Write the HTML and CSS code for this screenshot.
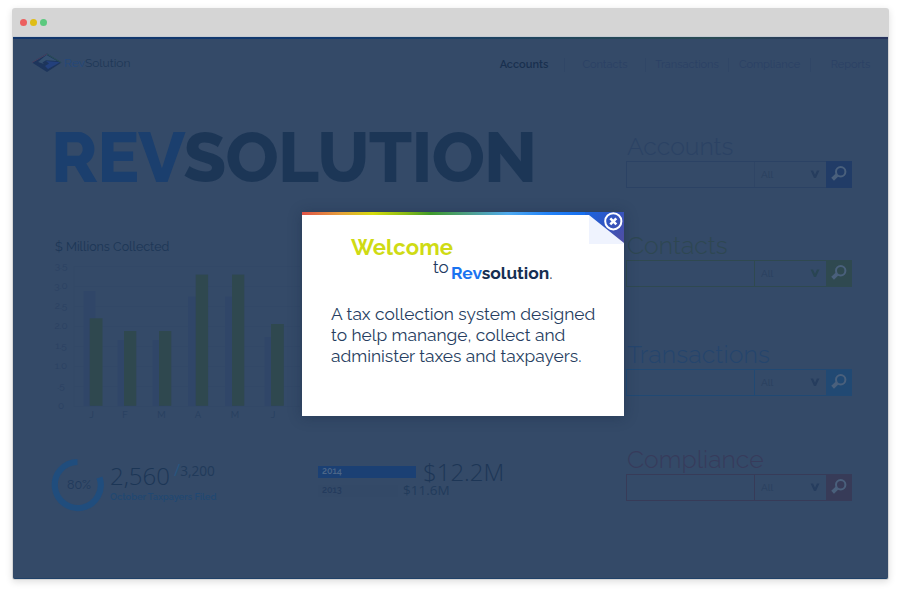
FILE: index.html
```html
<!DOCTYPE html>
<html lang="en">
<head>
<meta charset="utf-8">
<title>RevSolution</title>
<link rel="stylesheet" href="styles.css">
</head>
<body>
<svg width="0" height="0" class="defs" aria-hidden="true">
  <symbol id="search" viewBox="0 0 26 26">
    <circle cx="14.7" cy="10.7" r="4.7" fill="none" stroke="currentColor" stroke-width="2"/>
    <path d="M11.2 13.9 L6.6 18.2" stroke="currentColor" stroke-width="4" stroke-linecap="butt"/>
  </symbol>
  <symbol id="chevron" viewBox="0 0 10 9">
    <path d="M.6 .5 H3 L5 4.8 L7 .5 H9.4 L6 8 H4z" fill="currentColor"/>
  </symbol>
</svg>
<div class="window">
  <div class="titlebar"><i class="dot red"></i><i class="dot yellow"></i><i class="dot green"></i></div>
  <div class="screen">
    <header class="header">
      <div class="logo">
        <svg width="30" height="20" viewBox="0 0 30 20">
          <path d="M15 .5 L29.5 9.5 L15 19 L0 9.5z" fill="#1d355c"/>
          <path d="M14.5 2 L25 8 L14 7.3 L10.5 9.5 L12 11 L6 9z" fill="#345070"/>
          <path d="M0 9.5 L15 1" stroke="#49415f" stroke-width="1"/>
          <path d="M15 1 L29 9.5" stroke="#2c5156" stroke-width="1"/>
          <path d="M14 8 L28 9.2 L16 16 L13 13 L17 10.5z" fill="#23407c"/>
        </svg>
        <span class="brand"><b>Rev</b>Solution</span>
      </div>
      <nav class="nav"><a class="active">Accounts</a><a>Contacts</a><a class="wide">Transactions</a><a>Compliance</a><a>Reports</a></nav>
    </header>
    <main class="main">
      <section class="left">
        <h1 class="hero"><span>REV</span>SOLUTION</h1>
        <h2 class="chart-title">$ Millions Collected</h2>
        <svg class="chart" width="246" height="165" viewBox="0 0 246 165">
          <g class="grid"><path d="M20 11.5H246M20 31.5H246M20 51.5H246M20 71.5H246M20 91.5H246M20 111.5H246M20 131.5H246M20 151.5H246M20 11V152"/></g>
          <g class="ticks">
            <text x="7" y="14">3.5</text><text x="7" y="34">3.0</text><text x="7" y="54">2.5</text><text x="7" y="74">2.0</text><text x="7" y="94">1.5</text><text x="7" y="114">1.0</text><text x="7" y="134">.5</text><text x="7" y="154">0</text>
          </g>
          <g class="prev">
            <rect x="29.5" y="36" width="12" height="115"/><rect x="63.5" y="85" width="12" height="66"/><rect x="98.5" y="85" width="12" height="66"/><rect x="134" y="41.5" width="12" height="109.5"/><rect x="171" y="41.5" width="12" height="109.5"/><rect x="210.5" y="82" width="12" height="69"/>
          </g>
          <g class="curr">
            <rect x="35.7" y="63.3" width="12.8" height="87.5"/><rect x="70" y="76" width="12.3" height="74.8"/><rect x="105" y="76" width="12.3" height="74.8"/><rect x="141.7" y="19.6" width="12.4" height="131.2"/><rect x="178" y="19.6" width="12.3" height="131.2"/><rect x="217" y="69" width="12.8" height="81.8"/>
          </g>
          <g class="months"><text x="37.5" y="162.5">J</text><text x="71" y="162.5">F</text><text x="107.5" y="162.5">M</text><text x="144" y="162.5">A</text><text x="181" y="162.5">M</text><text x="219" y="162.5">J</text></g>
        </svg>
        <div class="stats">
          <div class="donut">
            <svg width="54" height="54" viewBox="0 0 54 54"><path d="M26.5 4 A23 23 0 1 0 48.5 19.5" fill="none" stroke="#204d7d" stroke-width="6.2"/></svg>
            <span>80%</span>
          </div>
          <div class="filed">
            <div class="figures"><span class="big">2,560</span><span class="slash">/</span><span class="small">3,200</span></div>
            <div class="caption">October Taxpayers Filed</div>
          </div>
          <div class="years">
            <div class="year now"><span class="bar">2014</span><span class="amount">$12.2M</span></div>
            <div class="year past"><span class="bar">2013</span><span class="amount">$11.6M</span></div>
          </div>
        </div>
      </section>
      <aside class="right">
        <div class="finder accounts"><h3>Accounts</h3><div class="field"><span class="input"></span><span class="select">All<svg width="10" height="9"><use href="#chevron"/></svg></span><span class="go"><svg width="26" height="26"><use href="#search"/></svg></span></div></div>
        <div class="finder contacts"><h3>Contacts</h3><div class="field"><span class="input"></span><span class="select">All<svg width="10" height="9"><use href="#chevron"/></svg></span><span class="go"><svg width="26" height="26"><use href="#search"/></svg></span></div></div>
        <div class="finder transactions"><h3>Transactions</h3><div class="field"><span class="input"></span><span class="select">All<svg width="10" height="9"><use href="#chevron"/></svg></span><span class="go"><svg width="26" height="26"><use href="#search"/></svg></span></div></div>
        <div class="finder compliance"><h3>Compliance</h3><div class="field"><span class="input"></span><span class="select">All<svg width="10" height="9"><use href="#chevron"/></svg></span><span class="go"><svg width="26" height="26"><use href="#search"/></svg></span></div></div>
      </aside>
    </main>
    <div class="modal">
      <div class="rainbow"></div>
      <svg class="corner" width="42" height="33" viewBox="0 0 42 33">
        <defs><linearGradient id="fold" x1="0" y1="0" x2="1" y2="0.7"><stop offset="0" stop-color="#1a66e0"/><stop offset=".5" stop-color="#2f55c4"/><stop offset="1" stop-color="#4b4fa8"/></linearGradient></defs>
        <path d="M7 3H42V32H7z" fill="#eff3fe"/>
        <path d="M3 0H42V31L7 3H3z" fill="url(#fold)"/>
        <circle cx="31.3" cy="9.3" r="8.1" fill="none" stroke="#fff" stroke-width="2"/>
        <path d="M28.3 6.3L34.3 12.3M34.3 6.3L28.3 12.3" stroke="#fff" stroke-width="2.6"/>
      </svg>
      <div class="welcome">Welcome</div>
      <div class="to-line"><span class="to">to</span><span class="name"><b>Rev</b>solution<i>.</i></span></div>
      <p class="message">A tax collection system designed<br>to help manange, collect and<br>administer taxes and taxpayers.</p>
    </div>
  </div>
</div>
</body>
</html>
```
FILE: styles.css
```css
* { box-sizing: border-box; }
body { margin: 0; width: 908px; height: 600px; overflow: hidden; background: #fff; font-family: Raleway, Lato, sans-serif; padding: 8px 19px 0 12px; }
h1, h2, h3, p { margin: 0; font-weight: 400; }
.defs { position: absolute; }
.window { width: 877px; height: 572px; border-radius: 3px; box-shadow: 0 2px 7px rgba(0,0,0,.13); background: #d5d5d5; }
.titlebar { height: 28px; display: flex; align-items: center; gap: 3px; padding-left: 8px; }
.dot { width: 7px; height: 7px; border-radius: 50%; }
.red { background: #ec5f5f; } .yellow { background: #dfbd16; } .green { background: #5bc97e; }
.screen { position: relative; width: 875px; height: 543px; margin: 0 1px; background: #344a68; border-top: 1px solid #c5cbd2; border-bottom: 1px solid #1f4168; border-radius: 0 0 2px 2px; }
.screen::before { content: ""; display: block; height: 2px; background: linear-gradient(90deg, #12366b, #123a70 35%, #23475a 65%, #2a4c55 80%, #27335c 95%); }

.header { height: 48px; display: flex; justify-content: space-between; overflow: hidden; }
.logo { display: flex; padding: 14px 0 0 19px; }
.brand { font-size: 12px; line-height: 21px; margin-left: 2px; color: #1f3857; }
.brand b { font-weight: 400; color: #23487c; }
.nav { display: grid; grid-template-columns: 81px 81px 83px 82px 77px; margin: 19px 0 0 0; height: 14px; }
.nav a { font-size: 11px; line-height: 13px; text-align: center; color: #2b4165; border-right: 1px solid #304666; }
.nav a:last-child { border: 0; padding-left: 2px; }
.nav a.active { color: #19304f; font-weight: 600; }

.main { display: flex; justify-content: space-between; padding: 0 36px 0 41px; }
.left { width: 500px; padding-top: 35px; }
.hero { font-size: 70px; line-height: 70px; font-weight: 800; color: #1c3656; white-space: nowrap; letter-spacing: -.75px; margin-left: -3px; }
.hero span { color: #1b3f6e; }
.chart-title { font-size: 12.5px; line-height: 16px; color: #1c3656; margin: 47px 0 0 1px; }
.chart { display: block; margin-top: 0; }
.grid path { stroke: #324867; fill: none; }
.ticks text { font-size: 10px; text-anchor: middle; fill: #2b4162; }
.months text { font-size: 9.5px; text-anchor: middle; fill: #273f5f; }
.prev { fill: #304668; } .curr { fill: #2f484f; }

.stats { display: flex; align-items: flex-start; margin: 38px 0 0 -3px; }
.donut { display: grid; width: 54px; height: 54px; place-items: center; }
.donut > * { grid-area: 1 / 1; }
.donut span { font-size: 12.5px; color: #20395b; line-height: 14px; padding-left: 2px; }
.filed { margin-left: 5px; width: 208px; }
.figures { display: flex; font-family: "Open Sans", sans-serif; font-weight: 300; color: #1c3656; height: 32px; }
.big { font-size: 24px; line-height: 35px; }
.slash { font-size: 17px; line-height: 24px; font-weight: 400; color: #28557f; margin: 0 0 0 4px; }
.small { font-size: 13.6px; line-height: 25px; font-weight: 400; color: #213a5a; }
.caption { font-size: 9.3px; line-height: 13px; font-weight: 600; color: #214872; }
.years { padding-top: 2px; }
.year { display: flex; align-items: center; font-family: "Open Sans", sans-serif; font-weight: 300; color: #1d3656; }
.bar { height: 12px; line-height: 11px; font-family: Raleway, Lato, sans-serif; font-size: 9px; font-weight: 600; padding-left: 4px; }
.now { height: 24px; } .past { height: 13px; }
.now .bar { width: 98px; background: #1b4074; color: #4d6788; }
.past .bar { width: 80px; background: #334967; color: #243b5d; }
.now .amount { font-size: 24px; line-height: 22px; margin: -1px 0 0 7px; }
.past .amount { font-size: 13.5px; line-height: 13px; margin-left: 5px; font-weight: 400; color: #223b5b; }

.right { width: 226px; padding-top: 45px; }
.finder { height: 99px; color: var(--c); }
.contacts { height: 109px; } .transactions { height: 105px; }
.accounts { --c: #2b4264; --b: #213c67; }
.contacts { --c: #2e4752; --b: #2f4950; }
.transactions { --c: #25456d; --b: #214973; }
.compliance { --c: #373b5b; --b: #373b58; }
.finder h3 { font-size: 24.8px; line-height: 30px; font-weight: 300; padding-left: 1px; height: 29px; }
.transactions h3 { letter-spacing: .15px; }
.field { display: flex; height: 27px; border: 1px solid var(--b); }
.accounts .field { border-color: #2b4264; }
.input { width: 128px; border-right: 1px solid var(--b); }
.accounts .input { border-color: #2f4565; }
.select { width: 71px; display: flex; align-items: center; justify-content: space-between; padding: 0 6px 0 6px; font-size: 10px; color: #293f5e; }
.select svg { color: #263d5e; }
.contacts .select svg { color: #294553; }
.go { width: 26px; height: 27px; margin: -1px -1px 0 0; background: var(--b); color: #4a607c; }
.go svg { display: block; }

.modal { position: absolute; left: 289px; top: 175px; width: 322px; height: 204px; background: #fff; box-shadow: 0 1px 12px rgba(20,35,60,.35); }
.rainbow { height: 3px; background: linear-gradient(90deg, #e05248 0, #e6a03a 12%, #d5dc0c 22%, #8cbc14 32%, #3f9a2a 40%, #4f9f8b 52%, #4faaf0 64%, #2484f8 76%, #176fee 87%); }
.corner { position: absolute; right: 0; top: 0; }
.welcome { font-size: 22px; line-height: 26px; font-weight: 700; color: #cfdb14; margin: 19px 0 0 49px; letter-spacing: .15px; }
.to-line { display: flex; margin-left: 131px; height: 28px; color: #20395f; }
.to { font-size: 17px; line-height: 14px; width: 18px; }
.name { font-size: 17.4px; line-height: 26px; font-weight: 700; color: #162f52; }
.name b { color: #1a73f0; font-weight: 700; } .name i { font-style: normal; font-weight: 400; }
.message { margin: 16px 0 0 29px; font-size: 17.35px; line-height: 20.8px; color: #263d60; white-space: nowrap; }
```
